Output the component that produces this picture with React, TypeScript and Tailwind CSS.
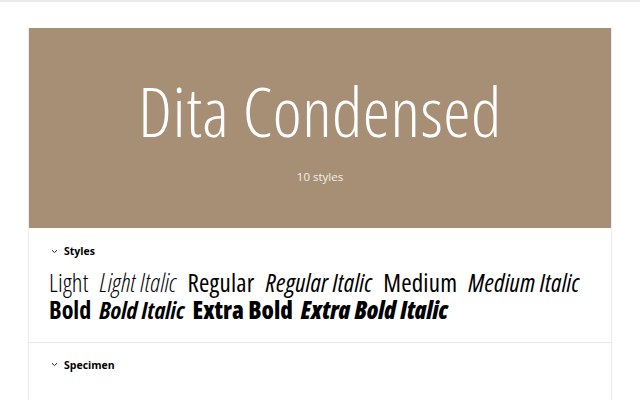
function Chevron() {
  return (
    <svg width="7" height="5" viewBox="0 0 7 5" className="mr-[6px]">
      <path d="M1 1.2 L3.5 3.6 L6 1.2" fill="none" stroke="#222" strokeWidth="1" />
    </svg>
  );
}

function SectionHeader({ title }: { title: string }) {
  return (
    <div className="flex items-center pl-[22px] text-[10.5px] font-bold text-black leading-none font-stretch-normal">
      <Chevron />
      <span>{title}</span>
    </div>
  );
}

const lightLine = [
  { name: "Light", cls: "font-[340]" },
  { name: "Light Italic", cls: "font-[340] italic" },
  { name: "Regular", cls: "font-normal" },
  { name: "Regular Italic", cls: "font-normal italic" },
  { name: "Medium", cls: "font-medium" },
  { name: "Medium Italic", cls: "font-medium italic" },
];

const boldLine = [
  { name: "Bold", cls: "font-bold" },
  { name: "Bold Italic", cls: "font-bold italic" },
  { name: "Extra Bold", cls: "font-extrabold" },
  { name: "Extra Bold Italic", cls: "font-extrabold italic" },
];

export default function App() {
  return (
    <div className="w-[640px] h-[400px] overflow-hidden bg-white border-t-2 border-[#ebebeb] font-['Open_Sans',sans-serif] font-stretch-condensed">
      <div className="mx-[28px] mt-[26px] w-[584px] border-x border-[#ececec]">
        <div className="h-[200px] bg-[#a68f74] flex flex-col items-center text-white">
          <h1 className="mt-[42px] text-[69px] leading-[80px] tracking-[0.5px] font-[350]">Dita Condensed</h1>
          <p className="mt-[18px] text-[11.5px] text-white/85 font-stretch-normal">10 styles</p>
        </div>
        <div className="pt-[18px] pb-[18px] border-b border-[#ebebeb]">
          <SectionHeader title="Styles" />
          <div className="mt-[11px] px-[20px] text-black leading-[28px]">
            <div className="flex gap-x-[11px] text-[25px] tracking-[0.2px]">
              {lightLine.map((s) => (
                <span key={s.name} className={s.cls}>
                  {s.name}
                </span>
              ))}
            </div>
            <div className="flex gap-x-[8px] text-[24px]">
              {boldLine.map((s) => (
                <span key={s.name} className={s.cls}>
                  {s.name}
                </span>
              ))}
            </div>
          </div>
        </div>
        <div className="pt-[17px] h-[60px]">
          <SectionHeader title="Specimen" />
        </div>
      </div>
    </div>
  );
}
